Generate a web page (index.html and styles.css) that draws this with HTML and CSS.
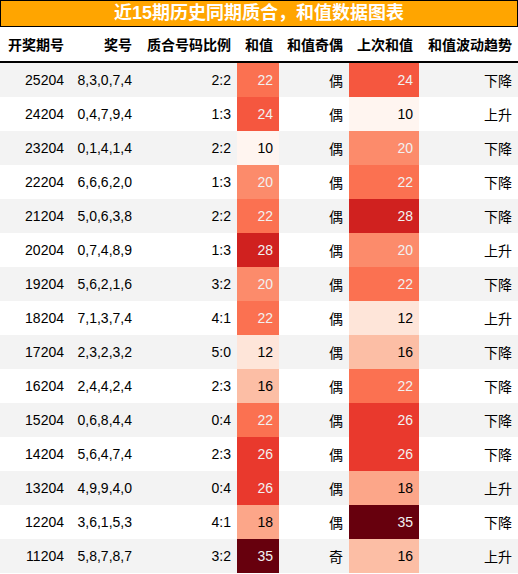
FILE: index.html
```html
<!DOCTYPE html>
<html lang="zh-CN">
<head>
    <meta charset="UTF-8">
    <meta name="viewport" content="width=device-width, initial-scale=1.0">
    <link rel="stylesheet" href="styles.css">
    <title>近15期历史同期质合，和值数据图表</title>
</head>
<body>

    <div class="titulo">近15期历史同期质合，和值数据图表</div>

    <table class="tabela">
        <colgroup>
            <col style="width: 70px">
            <col style="width: 68px">
            <col style="width: 99px">
            <col style="width: 42px">
            <col style="width: 70px">
            <col style="width: 70px">
            <col style="width: 99px">
        </colgroup>
        <thead>
            <tr>
                <th>开奖期号</th>
                <th>奖号</th>
                <th>质合号码比例</th>
                <th>和值</th>
                <th>和值奇偶</th>
                <th>上次和值</th>
                <th>和值波动趋势</th>
            </tr>
        </thead>
        <tbody>
            <tr><td>25204</td><td>8,3,0,7,4</td><td>2:2</td><td class="v22">22</td><td>偶</td><td class="v24">24</td><td>下降</td></tr>
            <tr><td>24204</td><td>0,4,7,9,4</td><td>1:3</td><td class="v24">24</td><td>偶</td><td class="v10">10</td><td>上升</td></tr>
            <tr><td>23204</td><td>0,1,4,1,4</td><td>2:2</td><td class="v10">10</td><td>偶</td><td class="v20">20</td><td>下降</td></tr>
            <tr><td>22204</td><td>6,6,6,2,0</td><td>1:3</td><td class="v20">20</td><td>偶</td><td class="v22">22</td><td>下降</td></tr>
            <tr><td>21204</td><td>5,0,6,3,8</td><td>2:2</td><td class="v22">22</td><td>偶</td><td class="v28">28</td><td>下降</td></tr>
            <tr><td>20204</td><td>0,7,4,8,9</td><td>1:3</td><td class="v28">28</td><td>偶</td><td class="v20">20</td><td>上升</td></tr>
            <tr><td>19204</td><td>5,6,2,1,6</td><td>3:2</td><td class="v20">20</td><td>偶</td><td class="v22">22</td><td>下降</td></tr>
            <tr><td>18204</td><td>7,1,3,7,4</td><td>4:1</td><td class="v22">22</td><td>偶</td><td class="v12">12</td><td>上升</td></tr>
            <tr><td>17204</td><td>2,3,2,3,2</td><td>5:0</td><td class="v12">12</td><td>偶</td><td class="v16">16</td><td>下降</td></tr>
            <tr><td>16204</td><td>2,4,4,2,4</td><td>2:3</td><td class="v16">16</td><td>偶</td><td class="v22">22</td><td>下降</td></tr>
            <tr><td>15204</td><td>0,6,8,4,4</td><td>0:4</td><td class="v22">22</td><td>偶</td><td class="v26">26</td><td>下降</td></tr>
            <tr><td>14204</td><td>5,6,4,7,4</td><td>2:3</td><td class="v26">26</td><td>偶</td><td class="v26">26</td><td>下降</td></tr>
            <tr><td>13204</td><td>4,9,9,4,0</td><td>0:4</td><td class="v26">26</td><td>偶</td><td class="v18">18</td><td>上升</td></tr>
            <tr><td>12204</td><td>3,6,1,5,3</td><td>4:1</td><td class="v18">18</td><td>偶</td><td class="v35">35</td><td>下降</td></tr>
            <tr><td>11204</td><td>5,8,7,8,7</td><td>3:2</td><td class="v35">35</td><td>奇</td><td class="v16">16</td><td>上升</td></tr>
        </tbody>
    </table>

</body>
</html>
```

FILE: styles.css
```css
body {
    margin: 0;
    background-color: #ffffff;
    color: #000000;
    font-family: "Liberation Sans", "Noto Sans CJK SC", sans-serif;
    font-size: 14px;
}

.titulo {
    height: 25px;
    line-height: 25px;
    background-color: #ffa500;
    border: 1px solid #000000;
    color: #ffffff;
    font-size: 18px;
    font-weight: 700;
    text-align: center;
}

.tabela {
    width: 518px;
    border-collapse: collapse;
    table-layout: fixed;
}
.tabela th {
    height: 34px;
    padding: 0 6px 0 0;
    text-align: right;
    font-weight: 700;
    border-bottom: 2px solid #000000;
    white-space: nowrap;
}
.tabela td {
    height: 34px;
    padding: 0 6px 0 0;
    text-align: right;
    white-space: nowrap;
}
.tabela tbody tr:nth-child(odd) {
    background-color: #f3f3f3;
}
.tabela tbody tr:nth-child(even) {
    background-color: #ffffff;
}

/* escala de cor do valor (10 a 35) */
.v10 { background-color: #fff5f0; color: #000000; }
.v12 { background-color: #fee5d9; color: #000000; }
.v16 { background-color: #fcbea5; color: #000000; }
.v18 { background-color: #fca689; color: #000000; }
.v20 { background-color: #fc8b6b; color: #f1f1f1; }
.v22 { background-color: #fb7151; color: #f1f1f1; }
.v24 { background-color: #f5573f; color: #f1f1f1; }
.v26 { background-color: #e9392d; color: #f1f1f1; }
.v28 { background-color: #d0211f; color: #f1f1f1; }
.v35 { background-color: #67000d; color: #f1f1f1; }
```
